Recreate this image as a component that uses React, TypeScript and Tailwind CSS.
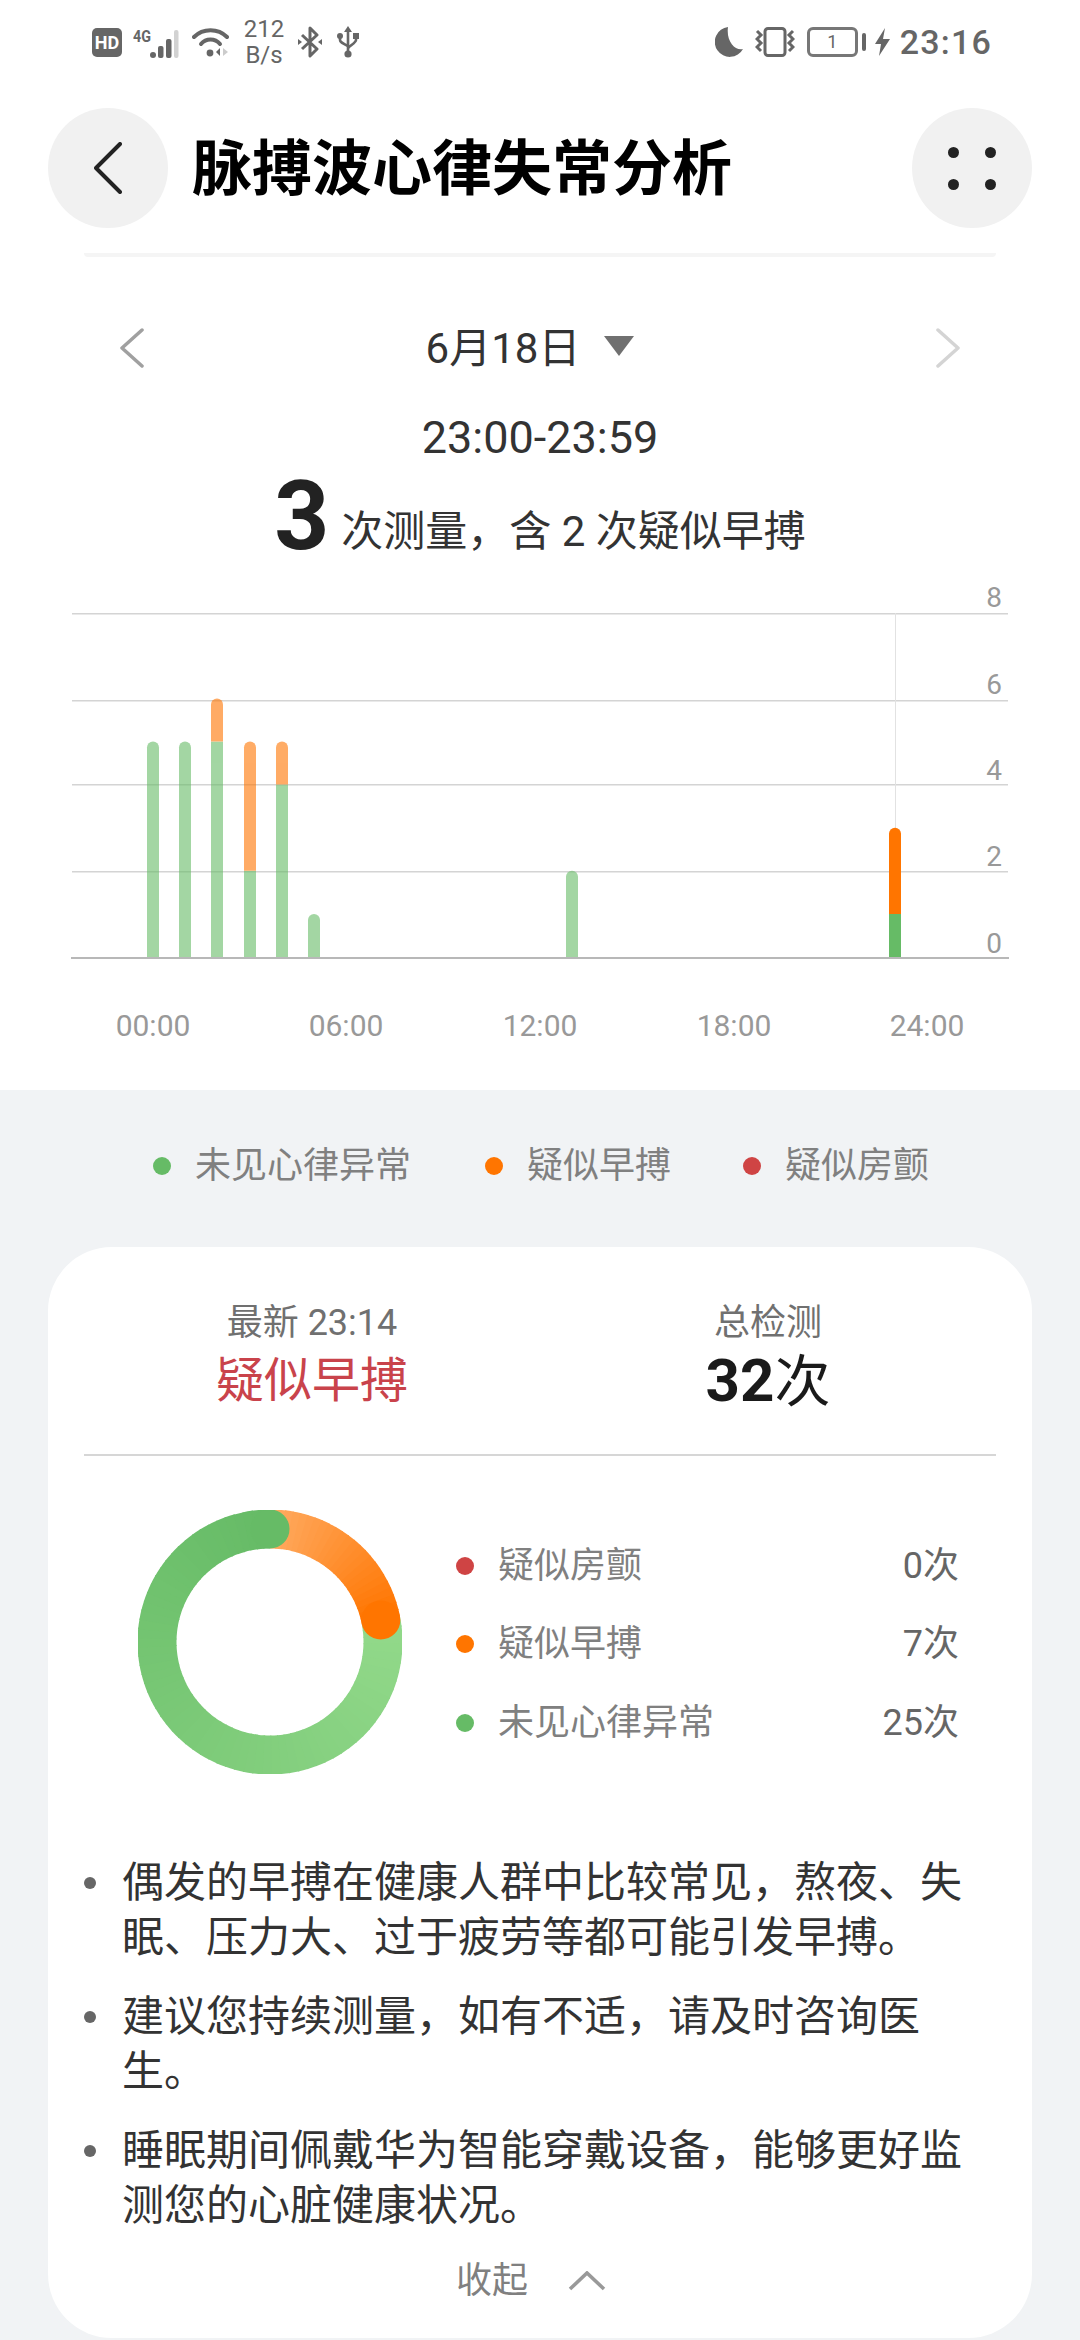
import * as React from "react"

const GREEN = "#66bb66"
const ORANGE = "#ff7500"
const RED = "#cf4444"

// value pairs: normal / premature count per hour slot
const bars = [
  { x: 147, green: 5, orange: 0 },
  { x: 179, green: 5, orange: 0 },
  { x: 211, green: 5, orange: 1 },
  { x: 244, green: 2, orange: 3 },
  { x: 276, green: 4, orange: 1 },
  { x: 308, green: 1, orange: 0 },
  { x: 566, green: 2, orange: 0 },
  { x: 889, green: 1, orange: 2, active: true },
]

const UNIT = 43.1
const BASE = 387

function barPath(x: number, y0: number, y1: number, rounded: boolean) {
  if (!rounded) return `M${x} ${y0}V${y1}H${x + 12}V${y0}Z`
  return `M${x} ${y0}V${y1 + 6}A6 6 0 0 1 ${x + 12} ${y1 + 6}V${y0}Z`
}

function Chart() {
  const grid = [43, 130, 214, 301]
  const yLabels = [
    { t: "8", y: 37 },
    { t: "6", y: 124 },
    { t: "4", y: 210 },
    { t: "2", y: 296 },
    { t: "0", y: 383 },
  ]
  const xLabels = [
    { t: "00:00", x: 153 },
    { t: "06:00", x: 346 },
    { t: "12:00", x: 540 },
    { t: "18:00", x: 734 },
    { t: "24:00", x: 927 },
  ]
  return (
    <svg width="1080" height="520" className="block shrink-0">
      {grid.map((y) => (
        <rect key={y} x="72" y={y} width="936" height="1.5" fill="#d4d4d4" />
      ))}
      <rect x="895" y="43" width="1" height="260" fill="#e2e2e2" />
      {bars.map((b) => {
        const greenTop = BASE - b.green * UNIT
        const orangeTop = greenTop - b.orange * UNIT
        const op = b.active ? 1 : 0.6
        return (
          <g key={b.x} opacity={op}>
            <path d={barPath(b.x, BASE, greenTop, b.orange === 0)} fill={GREEN} />
            {b.orange > 0 && <path d={barPath(b.x, greenTop, orangeTop, true)} fill={ORANGE} />}
          </g>
        )
      })}
      <rect x="71" y="387" width="938" height="2" fill="#b8b8b8" />
      {yLabels.map((l) => (
        <text key={l.t} x="1002" y={l.y} textAnchor="end" className="fill-[#999999] text-[28px]">
          {l.t}
        </text>
      ))}
      {xLabels.map((l) => (
        <text key={l.t} x={l.x} y="466" textAnchor="middle" className="fill-[#999999] text-[30px]">
          {l.t}
        </text>
      ))}
    </svg>
  )
}

function mix(a: number[], b: number[], t: number) {
  const c = a.map((v, i) => Math.round(v + (b[i] - v) * t))
  return `rgb(${c[0]},${c[1]},${c[2]})`
}

function polar(deg: number, r = 113) {
  const rad = (deg * Math.PI) / 180
  return [132 + r * Math.sin(rad), 132 - r * Math.cos(rad)]
}

function arc(a0: number, a1: number) {
  const [x0, y0] = polar(a0)
  const [x1, y1] = polar(a1)
  return `M${x0.toFixed(2)} ${y0.toFixed(2)}A113 113 0 0 1 ${x1.toFixed(2)} ${y1.toFixed(2)}`
}

function Donut() {
  const end = 78.75
  const greens = Array.from({ length: 70 }, (_, i) => i)
  const oranges = Array.from({ length: 24 }, (_, i) => i)
  const capEnd = polar(end)
  return (
    <svg width="264" height="264" viewBox="0 0 264 264" className="block shrink-0">
      {greens.map((i) => {
        const a0 = end + ((360 - end) * i) / 70
        const a1 = end + ((360 - end) * (i + 1)) / 70 + 0.6
        return (
          <path
            key={i}
            d={arc(a0, Math.min(a1, 360))}
            fill="none"
            strokeWidth="39"
            stroke={mix([146, 217, 138], [102, 187, 102], i / 69)}
          />
        )
      })}
      {oranges.map((i) => {
        const a0 = (end * i) / 24
        const a1 = (end * (i + 1)) / 24 + 0.6
        return (
          <path
            key={i}
            d={arc(a0, Math.min(a1, end))}
            fill="none"
            strokeWidth="39"
            stroke={mix([255, 170, 96], [255, 117, 0], i / 23)}
          />
        )
      })}
      <circle cx={capEnd[0]} cy={capEnd[1]} r="19.5" fill={ORANGE} />
      <circle cx="132" cy="19" r="19.5" fill={GREEN} />
    </svg>
  )
}

function StatusBar() {
  return (
    <div className="flex h-[84px] items-center justify-between pl-[92px] pr-[88px] text-[#666666]">
      <div className="flex items-center">
        <div className="flex h-[29px] w-[30px] items-center justify-center rounded-[5px] bg-[#666666] text-[18px] font-bold leading-[29px] text-white">
          HD
        </div>
        <svg width="50" height="36" viewBox="0 0 50 36" className="ml-[11px] mb-[-4px] mt-[-4px]">
          <text x="0" y="18" textLength="18" lengthAdjust="spacingAndGlyphs" className="fill-[#666666] text-[17px] font-bold">
            4G
          </text>
          <circle cx="20" cy="31" r="3" fill="#666666" />
          <rect x="25" y="22" width="5.5" height="12" rx="2" fill="#666666" />
          <rect x="33" y="15" width="5.5" height="19" rx="2" fill="#666666" />
          <rect x="41" y="6" width="4.5" height="28" rx="2" fill="#d2d2d2" />
        </svg>
        <svg width="38" height="30" viewBox="0 0 38 30" className="ml-[9px]">
          <path d="M2 10C11 1 26 1 35 10" fill="none" stroke="#666666" strokeWidth="4" strokeLinecap="round" />
          <path d="M9 17C14 11 23 11 28 17" fill="none" stroke="#666666" strokeWidth="4" strokeLinecap="round" />
          <circle cx="18" cy="26" r="3.4" fill="#666666" />
          <path d="M28 21V29L24 25Z" fill="#666666" />
          <path d="M31 21V29L36 25Z" fill="#cccccc" />
        </svg>
        <div className="ml-[14px] flex w-[40px] flex-col items-center text-[24px] leading-[26px]">
          <span>212</span>
          <span>B/s</span>
        </div>
        <svg width="24" height="32" viewBox="0 0 24 32" className="ml-[14px]">
          <path
            d="M4 9L19 23L12 30V2L19 9L4 23"
            fill="none"
            stroke="#666666"
            strokeWidth="3"
            strokeLinejoin="round"
          />
          <path d="M0 13L4 16L0 19Z" fill="#666666" />
          <path d="M24 13L20 16L24 19Z" fill="#666666" />
        </svg>
        <svg width="22" height="32" viewBox="0 0 22 32" className="ml-[15px]">
          <path d="M11 5V27" stroke="#666666" strokeWidth="2.6" />
          <path d="M11 0L15 6H7Z" fill="#666666" />
          <path
            d="M3 11V14C3 16 5 17 11 20M19 11V14C19 16 17 17 11 22"
            fill="none"
            stroke="#666666"
            strokeWidth="2.6"
          />
          <circle cx="3" cy="10" r="3" fill="#666666" />
          <rect x="16" y="7" width="6" height="6" fill="#666666" />
          <circle cx="11" cy="28" r="3.6" fill="#666666" />
        </svg>
      </div>
      <div className="flex items-center">
        <svg width="28" height="30" viewBox="0 0 28 30">
          <path d="M13 0A15 15 0 1 0 28 22C20 24 11 14 13 0Z" fill="#666666" />
        </svg>
        <svg width="40" height="30" viewBox="0 0 40 30" className="ml-[12px]">
          <rect x="10" y="1.5" width="20" height="27" rx="3" fill="none" stroke="#666666" strokeWidth="3" />
          <path d="M2 4L6 8L2 12L6 16L2 20L6 24" fill="none" stroke="#666666" strokeWidth="3" />
          <path d="M38 4L34 8L38 12L34 16L38 20L34 24" fill="none" stroke="#666666" strokeWidth="3" />
        </svg>
        <div className="ml-[12px] flex h-[30px] w-[51px] items-center justify-center rounded-[6px] border-[3px] border-[#777777] text-[18px] leading-none">
          1
        </div>
        <div className="ml-[4px] h-[18px] w-[4px] rounded-[2px] bg-[#666666]" />
        <svg width="15" height="28" viewBox="0 0 15 28" className="ml-[9px]">
          <path d="M10 0L0 16H6L4 28L15 11H8Z" fill="#666666" />
        </svg>
        <span className="ml-[10px] text-[34px] font-medium leading-none tracking-[1.2px]">23:16</span>
      </div>
    </div>
  )
}

function Chevron({ dir, color, w, h, sw }: { dir: "left" | "right"; color: string; w: number; h: number; sw: number }) {
  const points = dir === "left" ? `${w - 2},2 2,${h / 2} ${w - 2},${h - 2}` : `2,2 ${w - 2},${h / 2} 2,${h - 2}`
  return (
    <svg width={w} height={h} viewBox={`0 0 ${w} ${h}`} className="block">
      <polyline points={points} fill="none" stroke={color} strokeWidth={sw} strokeLinecap="round" strokeLinejoin="round" />
    </svg>
  )
}

function Legend({ color, label }: { color: string; label: string }) {
  return (
    <div className="flex items-center gap-[24px]">
      <div className="h-[18px] w-[18px] rounded-full" style={{ backgroundColor: color }} />
      <span className="text-[36px] text-[#808080]">{label}</span>
    </div>
  )
}

function Count({ color, label, value }: { color: string; label: string; value: string }) {
  return (
    <div className="flex h-[78.5px] items-center">
      <div className="h-[18px] w-[18px] rounded-full" style={{ backgroundColor: color }} />
      <span className="ml-[24px] text-[36px] text-[#808080]">{label}</span>
      <span className="ml-auto text-[36px] text-[#666666]">{value}</span>
    </div>
  )
}

const tips = [
  "偶发的早搏在健康人群中比较常见，熬夜、失眠、压力大、过于疲劳等都可能引发早搏。",
  "建议您持续测量，如有不适，请及时咨询医生。",
  "睡眠期间佩戴华为智能穿戴设备，能够更好监测您的心脏健康状况。",
]

export default function App() {
  return (
    <div className="h-[2340px] w-[1080px] overflow-hidden bg-[#f1f3f5] font-['Roboto','Noto_Sans_CJK_SC',sans-serif]">
      <div className="h-[1090px] bg-white">
        <StatusBar />
        <div className="mt-[24px] flex items-center justify-between px-[48px]">
          <div className="flex items-center">
            <div className="flex h-[120px] w-[120px] items-center justify-center rounded-full bg-[#f1f1f1]">
              <Chevron dir="left" color="#222222" w={28} h={52} sw={4} />
            </div>
            <h1 className="ml-[24px] mt-[4px] text-[60px] font-bold leading-none text-black">脉搏波心律失常分析</h1>
          </div>
          <div className="grid h-[120px] w-[120px] grid-cols-2 place-items-center content-center gap-x-[25px] gap-y-[21px] rounded-full bg-[#f1f1f1] px-[36px]">
            <div className="h-[11px] w-[11px] rounded-full bg-[#222222]" />
            <div className="h-[11px] w-[11px] rounded-full bg-[#222222]" />
            <div className="h-[11px] w-[11px] rounded-full bg-[#222222]" />
            <div className="h-[11px] w-[11px] rounded-full bg-[#222222]" />
          </div>
        </div>
        <div className="mx-[84px] mt-[25px] h-[4px] rounded-b-[4px] bg-[#f5f5f5]" />

        <div className="mt-[61px] flex h-[60px] items-center justify-between px-[120px]">
          <Chevron dir="left" color="#a0a0a0" w={24} h={40} sw={3.5} />
          <div className="mr-[19px] flex items-center">
            <span className="text-[42px] text-[#333333]">6月18日</span>
            <svg width="32" height="22" viewBox="0 0 32 22" className="mb-[4px] ml-[23px]">
              <path d="M1 1H31L16 21Z" fill="#707070" strokeLinejoin="round" />
            </svg>
          </div>
          <Chevron dir="right" color="#d4d4d4" w={24} h={40} sw={3.5} />
        </div>

        <div className="mt-[35px] text-center text-[45px] leading-[50px] text-[#333333]">23:00-23:59</div>

        <div className="mt-[5px] flex h-[96px] items-baseline justify-center text-[#333333]">
          <span className="mr-[12px] text-[96px] font-bold leading-[96px] text-[#222222]">3</span>
          <span className="-translate-y-[3px] text-[42px] leading-none">次测量，含 2 次疑似早搏</span>
        </div>

        <div className="mt-[6px]">
          <Chart />
        </div>
      </div>

      <div className="flex h-[152px] items-center pl-[153px]">
        <Legend color={GREEN} label="未见心律异常" />
        <div className="ml-[74px]">
          <Legend color={ORANGE} label="疑似早搏" />
        </div>
        <div className="ml-[72px]">
          <Legend color={RED} label="疑似房颤" />
        </div>
      </div>

      <div className="mx-[48px] mt-[5px] h-[1091px] rounded-[64px] bg-white px-[36px] pt-[51px]">
        <div className="grid grid-cols-2 text-center">
          <div>
            <div className="text-[36px] leading-[50px] text-[#707070]">最新 23:14</div>
            <div className="text-[48px] leading-[66px] text-[#c9434b]">疑似早搏</div>
          </div>
          <div>
            <div className="text-[36px] leading-[50px] text-[#707070]">总检测</div>
            <div className="flex h-[66px] items-baseline justify-center leading-[66px] text-[#1a1a1a]">
              <span className="text-[60px] font-bold">32</span>
              <span className="text-[56px]">次</span>
            </div>
          </div>
        </div>
        <div className="mt-[40px] h-[2px] bg-[#d6d6d6]" />

        <div className="mt-[54px] flex items-center pl-[54px]">
          <Donut />
          <div className="ml-[54px] mt-[4px] w-[503px]">
            <Count color={RED} label="疑似房颤" value="0次" />
            <Count color={ORANGE} label="疑似早搏" value="7次" />
            <Count color={GREEN} label="未见心律异常" value="25次" />
          </div>
        </div>

        <div className="mt-[81px] flex flex-col gap-[24px]">
          {tips.map((tip) => (
            <div key={tip} className="flex">
              <div className="mt-[22px] h-[12px] w-[12px] shrink-0 rounded-full bg-[#666666]" />
              <p className="ml-[26px] text-[42px] leading-[55px] text-[#333333]">{tip}</p>
            </div>
          ))}
        </div>

        <div className="mt-[20px] flex h-[56px] items-center justify-center">
          <div className="mr-[18px] flex items-center gap-[40px]">
            <span className="text-[36px] text-[#808080]">收起</span>
            <svg width="38" height="20" viewBox="0 0 38 20">
              <polyline points="2,18 19,2 36,18" fill="none" stroke="#999999" strokeWidth="3.6" />
            </svg>
          </div>
        </div>
      </div>
    </div>
  )
}
